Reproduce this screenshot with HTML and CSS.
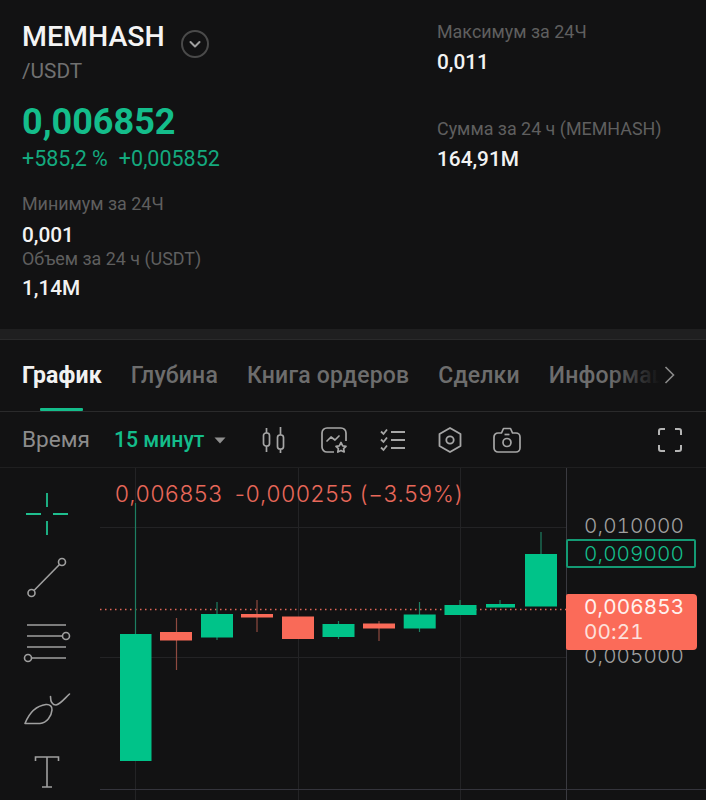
FILE: index.html
```html
<!DOCTYPE html>
<html lang="ru">
<head>
<meta charset="utf-8">
<title>MEMHASH/USDT</title>
<link rel="stylesheet" href="styles.css">
</head>
<body>
<main class="screen">
  <section class="summary">
    <div class="col col-left">
      <div class="pair">
        <h1 class="symbol">MEMHASH</h1>
        <svg class="pair-toggle" width="30" height="30" viewBox="0 0 30 30" fill="none"><circle cx="15" cy="15" r="13" stroke="#4a4a4a" stroke-width="2"/><path d="M10.5 13l4.5 4.5 4.5-4.5" stroke="#a0a0a0" stroke-width="2" stroke-linecap="round" stroke-linejoin="round"/></svg>
      </div>
      <div class="quote">/USDT</div>
      <div class="price">0,006852</div>
      <div class="change"><span>+585,2 %</span><span>+0,005852</span></div>
      <div class="stat stat-low"><div class="stat-label">Минимум за 24Ч</div><div class="stat-value">0,001</div></div>
      <div class="stat stat-vol"><div class="stat-label">Объем за 24 ч (USDT)</div><div class="stat-value">1,14M</div></div>
    </div>
    <div class="col col-right">
      <div class="stat"><div class="stat-label">Максимум за 24Ч</div><div class="stat-value">0,011</div></div>
      <div class="stat stat-sum"><div class="stat-label">Сумма за 24 ч (MEMHASH)</div><div class="stat-value">164,91M</div></div>
    </div>
  </section>

  <div class="divider"></div>

  <nav class="tabs">
    <a class="tab active">График</a>
    <a class="tab">Глубина</a>
    <a class="tab">Книга ордеров</a>
    <a class="tab">Сделки</a>
    <a class="tab">Информация</a>
    <div class="tabs-fade">
      <svg width="12" height="20" viewBox="0 0 12 20" fill="none"><path d="M1.5 2l8 8-8 8" stroke="#8a8a8a" stroke-width="1.6"/></svg>
    </div>
  </nav>

  <div class="toolbar">
    <span class="time-label">Время</span>
    <span class="interval">15 минут</span>
    <svg class="caret" width="12" height="7" viewBox="0 0 12 7"><path d="M0.5 0.5h11L6 6.5z" fill="#8f8f8f"/></svg>
    <svg class="tool-icon i-candle" width="26" height="28" viewBox="0 0 26 28" fill="none" stroke="#a6a6a6" stroke-width="1.7"><rect x="2.5" y="7" width="6" height="13" rx="2.5"/><path d="M5.5 2v5M5.5 20v6"/><rect x="16.500" y="9" width="6" height="14" rx="2.500"/><path d="M19.500 1v8M19.500 23v4"/></svg>
    <svg class="tool-icon i-fav" width="28" height="28" viewBox="0 0 28 28" fill="none" stroke="#a6a6a6" stroke-width="1.700"><path d="M14 26H7a5 5 0 0 1-5-5V7a5 5 0 0 1 5-5h14a5 5 0 0 1 5 5v8"/><path d="M7 15l4-4 4 3 4-4" stroke-linecap="round" stroke-linejoin="round"/><path d="M21 16.500l1.700 3.300 3.300.5-2.400 2.300.6 3.400-3.200-1.600-3.200 1.600.6-3.400-2.400-2.300 3.300-.5z" stroke-linejoin="round"/></svg>
    <svg class="tool-icon i-list" width="26" height="24" viewBox="0 0 26 24" fill="none" stroke="#a6a6a6" stroke-width="1.800"><path d="M11 4h14M11 12h14M11 20h14"/><path d="M1 3.500l2.500 2.500L7 1.500M1 11.500l2.500 2.500L7 9.500M1 19.500l2.500 2.500L7 17.500"/></svg>
    <svg class="tool-icon i-hex" width="26" height="28" viewBox="0 0 26 28" fill="none" stroke="#a6a6a6" stroke-width="1.800"><path d="M13 2l10.500 6v12L13 26 2.500 20V8z" stroke-linejoin="round"/><circle cx="13" cy="14" r="3.700"/></svg>
    <svg class="tool-icon i-cam" width="28" height="28" viewBox="0 0 28 28" fill="none" stroke="#a6a6a6" stroke-width="1.700"><path d="M5 7h3.500l2-4.500h7l2 4.500H23a4 4 0 0 1 4 4v11a4 4 0 0 1-4 4H5a4 4 0 0 1-4-4V11a4 4 0 0 1 4-4z" stroke-linejoin="round"/><circle cx="14" cy="16.500" r="4"/><path d="M11.500 8.500h5"/></svg>
    <svg class="tool-icon i-full" width="24" height="24" viewBox="0 0 24 24" fill="none" stroke="#b4b4b4" stroke-width="2"><path d="M1 7V3a2 2 0 0 1 2-2h4M17 1h4a2 2 0 0 1 2 2v4M23 17v4a2 2 0 0 1-2 2h-4M7 23H3a2 2 0 0 1-2-2v-4"/></svg>
  </div>

  <section class="chart">
    <aside class="drawing-tools">
      <svg width="44" height="44" viewBox="0 0 44 44" fill="none" stroke="#1fbf8f" stroke-width="1.800"><path d="M22 1v14M22 29v14M1 22h15M28 22h15"/></svg>
      <svg width="40" height="42" viewBox="0 0 40 42" fill="none" stroke="#a0a0a0" stroke-width="1.600"><circle cx="35" cy="6" r="3.500"/><circle cx="4.500" cy="37" r="3.500"/><path d="M32.500 8.500L7 34.500"/></svg>
      <svg width="48" height="42" viewBox="0 0 48 42" fill="none" stroke="#a0a0a0" stroke-width="1.600"><path d="M4 2h39M4 13h35M4 24h39M9 35h34"/><circle cx="43" cy="13" r="3.500"/><circle cx="5" cy="35" r="3.500"/></svg>
      <svg width="48" height="36" viewBox="0 0 48 36" fill="none" stroke="#a0a0a0" stroke-width="1.600"><path d="M2 31.500C5 24 11 14 23 12.500C27 12 29.500 15 29 18C28.500 24 24 31 17 31.500Z" stroke-linejoin="round"/><path d="M27.500 4.500C27.500 9 29 13 33 13C37 12.500 42 6 46.500 2" stroke-linecap="round"/></svg>
      <svg width="26" height="34" viewBox="0 0 26 34" fill="none" stroke="#a0a0a0" stroke-width="1.600"><path d="M1.500 6V2h23v4M13 2v30M8 32h10"/></svg>
    </aside>
    <div class="plot">
      <svg class="plot-svg" width="606" height="332" viewBox="100 468 606 332" fill="none">
        <g stroke="#232325" stroke-width="1">
          <path d="M100 527.500H566M100 657.500H566M135.500 468V800M298.500 468V800M460.500 468V800"/>
        </g>
        <path d="M100 789.500H706" stroke="#34343c"/>
        <path d="M566.500 468V800" stroke="#3a3a40"/>
        <path d="M100 609.500H566" stroke="#e2685a" stroke-dasharray="1.500 3.500" stroke-width="1.500"/>
        <g stroke="#1d7f62" stroke-width="1.200">
          <path d="M135.500 503V634M217 602V640M338.500 621V639M419.500 602V632M460 600V615M500 600V607M541 532V554"/>
        </g>
        <g stroke="#8e4a40" stroke-width="1.200">
          <path d="M176.500 618V670M257 600V632M379 621V641"/>
        </g>
        <g fill="#00c389">
          <rect x="120" y="634" width="31.500" height="127"/>
          <rect x="201" y="614" width="32" height="23.500"/>
          <rect x="322.500" y="624" width="32" height="13"/>
          <rect x="403.700" y="614.500" width="32" height="14"/>
          <rect x="444.500" y="605" width="32" height="10"/>
          <rect x="486" y="604" width="29" height="3.500"/>
          <rect x="525" y="554" width="32" height="52.500"/>
        </g>
        <g fill="#f96a58">
          <rect x="160" y="632" width="32" height="8.500"/>
          <rect x="241" y="614" width="32" height="3.500"/>
          <rect x="282" y="616.500" width="32" height="22.500"/>
          <rect x="363" y="623.500" width="32" height="5"/>
        </g>
      </svg>
      <div class="ohlc">0,006853&nbsp;&nbsp;-0,000255&nbsp;(−3.59%)</div>
      <div class="axis-label axis-10">0,010000</div>
      <div class="axis-label axis-5">0,005000</div>
      <div class="axis-box">0,009000</div>
      <div class="last-price"><div>0,006853</div><div class="countdown">00:21</div></div>
    </div>
  </section>
</main>
</body>
</html>
```
FILE: styles.css
```css
* { box-sizing: border-box; margin: 0; padding: 0; }
html, body { width: 706px; height: 800px; overflow: hidden; background: #121213; }
body { font-family: Roboto, "Noto Sans", sans-serif; color: #f2f2f2; }
.screen { width: 706px; height: 800px; display: flex; flex-direction: column; }

.summary { height: 329px; display: flex; padding: 0 22px; flex: none; }
.col-left { width: 415px; padding-top: 19px; }
.col-right { padding-top: 22px; }
.pair { display: flex; align-items: center; height: 36px; }
.symbol { font-size: 28.5px; font-weight: 500; line-height: 36px; color: #f4f4f4; }
.pair-toggle { margin: 14px 0 0 15px; }
.quote { font-size: 20.8px; line-height: 24px; color: #707070; margin-top: 4px; }
.price { font-size: 36px; font-weight: 700; line-height: 42px; color: #14bd8b; margin-top: 18px; }
.change { display: flex; gap: 11px; font-size: 21.5px; line-height: 24px; color: #14a97e; margin-top: 4px; }
.stat-label { font-size: 17.9px; line-height: 20px; color: #5f5f5f; }
.stat-value { font-size: 20.8px; line-height: 24px; color: #f2f2f2; margin-top: 8px; font-weight: 500; }
.stat-low { margin-top: 23px; }
.stat-low .stat-value { margin-top: 9px; }
.stat-vol .stat-label { margin-top: 2px; }
.stat-vol .stat-value { margin-top: 7px; }
.stat-sum { margin-top: 45px; }

.divider { height: 11px; flex: none; background: #1f1f20; border-bottom: 1px solid #2a2a2b; }

.tabs { position: relative; flex: none; height: 72px; display: flex; gap: 29px; padding: 0 0 0 22px; border-bottom: 1px solid #2a2a2b; overflow: hidden; white-space: nowrap; align-items: flex-start; }
.tab { position: relative; font-size: 23px; font-weight: 500; line-height: 26px; margin-top: 23px; color: #6d6d6d; letter-spacing: 0.17px; }
.tab.active { color: #f2f2f2; font-weight: 700; }
.tab.active::after { content: ""; position: absolute; left: 18px; right: 19px; top: 45px; height: 3px; background: #14bd8b; border-radius: 1px; }
.tabs-fade { position: absolute; left: 610px; right: 0; top: 0; height: 70px; padding: 25px 0 0 54px; background: linear-gradient(90deg, rgba(18,18,19,0) 0, #121213 50px); }

.toolbar { position: relative; flex: none; height: 56px; display: flex; align-items: center; padding-left: 22px; border-bottom: 1px solid #1f1f20; }
.time-label { font-size: 22.6px; color: #8c8c8c; width: 92px; }
.interval { font-size: 21.2px; font-weight: 500; color: #14bd8b; width: 100px; }
.caret { margin-top: 1px; }
.tool-icon { flex: none; }
.i-candle { margin-left: 35px; }
.i-fav { margin-left: 33px; }
.i-list { margin-left: 32px; }
.i-hex { margin-left: 31px; }
.i-cam { margin-left: 30px; }
.i-full { margin-left: 137px; }

.chart { position: relative; flex: 1; display: flex; min-height: 0; }
.drawing-tools { width: 100px; flex: none; display: flex; flex-direction: column; align-items: center; padding: 24px 6px 0 0; }
.drawing-tools svg:nth-child(2) { margin-top: 20px; }
.drawing-tools svg:nth-child(3) { margin-top: 25px; }
.drawing-tools svg:nth-child(4) { margin-top: 27px; }
.drawing-tools svg:nth-child(5) { margin-top: 27px; }

.plot { position: relative; flex: 1; min-width: 0; }
.plot-svg { position: absolute; left: 0; top: 0; display: block; }
.ohlc { position: absolute; left: 15px; top: 13px; font-family: Inter, sans-serif; font-size: 22.5px; line-height: 26px; color: #e8685a; white-space: nowrap; letter-spacing: 0.8px; word-spacing: -1px; font-weight: 300; }
.axis-label, .axis-box, .last-price { position: absolute; font-family: Inter, sans-serif; font-size: 20.7px; line-height: 26px; white-space: nowrap; letter-spacing: 0.1px; font-variant-numeric: tabular-nums; font-weight: 300; }
.axis-label { left: 484px; color: #a0a0a0; }
.axis-10 { top: 45px; }
.axis-5 { top: 175px; }
.axis-box { left: 466px; top: 71px; width: 130px; height: 29px; padding-left: 16px; line-height: 25px; border: 2px solid #149a74; border-radius: 2px; color: #14bd8b; }
.last-price { left: 466px; top: 126px; width: 131px; height: 56px; padding: 1px 0 0 18px; line-height: 24.5px; background: #fb6b59; border-radius: 2px 4px 4px 2px; color: #fff1ee; font-weight: 400; }
.countdown { color: #fde0db; }
```
